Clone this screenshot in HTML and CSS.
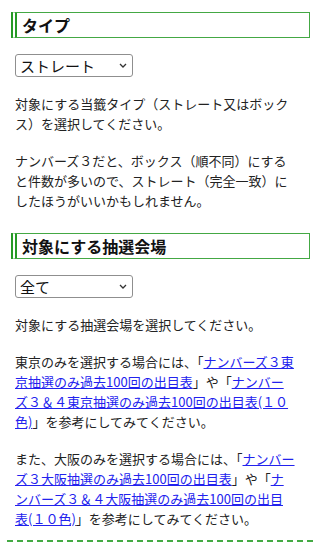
FILE: index.html
```html
<!DOCTYPE html>
<html lang="ja">
<head>
<meta charset="utf-8">
<link rel="stylesheet" href="styles.css">
</head>
<body>
<div class="content">
  <section class="block">
    <h2 class="heading">タイプ</h2>
    <select class="picker">
      <option>ストレート</option>
      <option>ボックス</option>
    </select>
    <p class="text">対象にする当籤タイプ（ストレート又はボックス）を選択してください。</p>
    <p class="text">ナンバーズ３だと、ボックス（順不同）にすると件数が多いので、ストレート（完全一致）にしたほうがいいかもしれません。</p>
  </section>
  <section class="block">
    <h2 class="heading second">対象にする抽選会場</h2>
    <select class="picker">
      <option>全て</option>
      <option>東京</option>
      <option>大阪</option>
    </select>
    <p class="text">対象にする抽選会場を選択してください。</p>
    <p class="text">東京のみを選択する場合には、「<a href="#">ナンバーズ３東京抽選のみ過去100回の出目表</a>」や「<a href="#">ナンバーズ３＆４東京抽選のみ過去100回の出目表(１０色)</a>」を参考にしてみてください。</p>
    <p class="text">また、大阪のみを選択する場合には、「<a href="#">ナンバーズ３大阪抽選のみ過去100回の出目表</a>」や「<a href="#">ナンバーズ３＆４大阪抽選のみ過去100回の出目表(１０色)</a>」を参考にしてみてください。</p>
  </section>
</div>
<div class="divider"></div>
</body>
</html>
```

FILE: styles.css
```css
html, body {
  margin: 0;
  padding: 0;
  background: #ffffff;
}

body {
  font-family: "Noto Sans CJK JP", "Noto Sans", sans-serif;
  color: #222222;
}

.content {
  padding: 12px 0 0 15px;
}

.heading {
  margin: 0 10px 0 -4px;
  padding: 0 0 0 5px;
  height: 24px;
  line-height: 24px;
  font-size: 16px;
  font-weight: bold;
  color: #111111;
  border: 1px solid #44a844;
  border-left: 6px double #259a25;
}

.heading.second {
  margin-top: 22px;
}

.picker {
  display: block;
  margin: 16px 0 0 0;
  width: 118px;
  height: 23px;
  font-family: "Noto Sans CJK JP", "Noto Sans", sans-serif;
  font-size: 15px;
  color: #111111;
  border: 1px solid #8f8f8f;
  border-radius: 3px;
  padding: 0 14px 0 4px;
  -webkit-appearance: none;
  appearance: none;
  background-color: #ffffff;
  background-image: url("data:image/svg+xml;utf8,<svg xmlns='http://www.w3.org/2000/svg' width='8' height='5' viewBox='0 0 8 5'><path d='M1 1 L4 4 L7 1' fill='none' stroke='%23333333' stroke-width='1.3'/></svg>");
  background-repeat: no-repeat;
  background-position: right 5px center;
  background-size: 8px 5px;
}

.text {
  margin: 17px 0 0 0;
  width: 280.5px;
  font-size: 13px;
  line-height: 20px;
}

.text a {
  color: #2222ee;
  text-decoration: underline;
}

.divider {
  margin: 11px 7px 0 7px;
  border-top: 2px dashed #44aa44;
}
```
